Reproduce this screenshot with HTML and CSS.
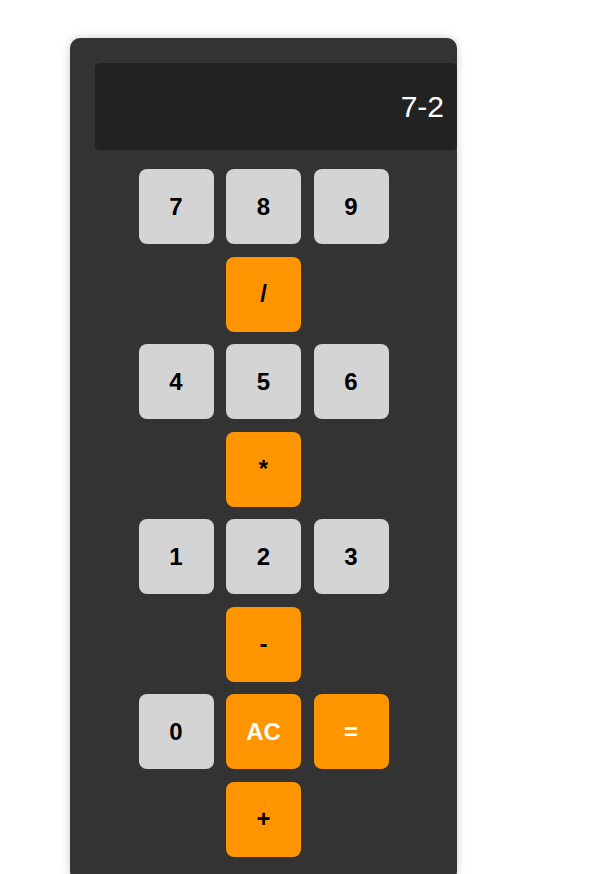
FILE: index.html
```html
<!DOCTYPE html>
<html>
<head>
<meta charset="utf-8">
<link rel="stylesheet" href="styles.css">
</head>
<body>
<div class="calc">
  <div class="display">7-2</div>
  <div class="keypad">
    <div class="row">
      <div class="key num">7</div><div class="key num">8</div><div class="key num">9</div>
    </div>
    <div class="row"><div class="key op">/</div></div>
    <div class="row">
      <div class="key num">4</div><div class="key num">5</div><div class="key num">6</div>
    </div>
    <div class="row"><div class="key op">*</div></div>
    <div class="row">
      <div class="key num">1</div><div class="key num">2</div><div class="key num">3</div>
    </div>
    <div class="row"><div class="key op">-</div></div>
    <div class="row">
      <div class="key num">0</div><div class="key op light">AC</div><div class="key op light">=</div>
    </div>
    <div class="row"><div class="key op">+</div></div>
  </div>
</div>
</body>
</html>
```
FILE: styles.css
```css
body {
  margin: 8px;
  background: #ffffff;
  font-family: "Liberation Sans", Arial, sans-serif;
}
.calc {
  width: 387px;
  margin: 30px 0 0 62px;
  padding: 25px 0 25px 25px;
  box-sizing: border-box;
  background: #333333;
  border-radius: 10px;
  box-shadow: 0 0 10px rgba(0, 0, 0, 0.2);
}
.display {
  height: 87px;
  box-sizing: border-box;
  background: #222222;
  border-radius: 5px;
  color: #ffffff;
  font-size: 30px;
  display: flex;
  align-items: center;
  justify-content: flex-end;
  padding-right: 13px;
}
.keypad {
  margin-top: 19px;
  padding-right: 25px;
  display: flex;
  flex-direction: column;
  gap: 12.5px;
}
.row {
  display: flex;
  justify-content: center;
  gap: 12.5px;
}
.key {
  width: 75px;
  height: 75px;
  border-radius: 8px;
  display: flex;
  align-items: center;
  justify-content: center;
  font-size: 24px;
  font-weight: bold;
  color: #000000;
}
.num {
  background: #d4d4d4;
}
.op {
  background: #ff9500;
}
.op.light {
  color: #ffffff;
}
```
